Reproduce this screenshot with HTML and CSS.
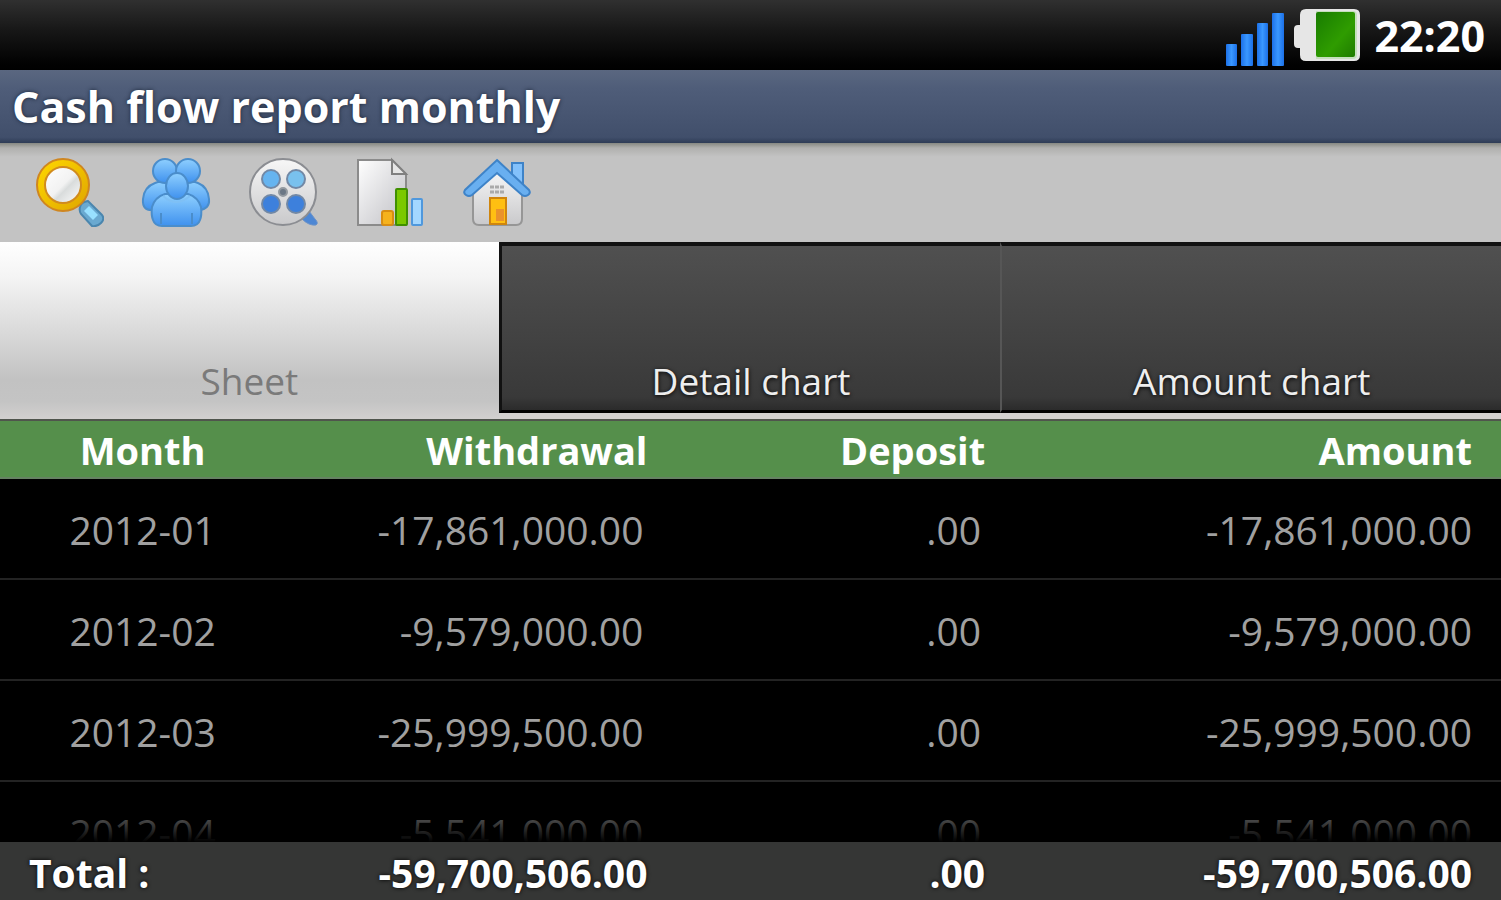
FILE: index.html
```html
<!DOCTYPE html>
<html lang="en">
<head>
  <meta charset="UTF-8" />
  <meta name="viewport" content="width=device-width, initial-scale=1" />
  <title>Cash flow report monthly</title>
  <link rel="stylesheet" href="styles.css">
</head>
<body>

  <div class="status-bar">
    <svg class="signal" viewBox="0 0 60 56" aria-hidden="true">
      <defs>
        <linearGradient id="bar" x1="0" y1="0" x2="1" y2="0">
          <stop offset="0" stop-color="#1c70e8" />
          <stop offset=".5" stop-color="#3a98ff" />
          <stop offset="1" stop-color="#1c70e8" />
        </linearGradient>
      </defs>
      <g fill="url(#bar)">
        <rect x="1" y="34" width="11" height="22" rx="1" />
        <rect x="16" y="24" width="12" height="32" rx="1" />
        <rect x="32" y="13" width="11" height="43" rx="1" />
        <rect x="47" y="3" width="12" height="53" rx="1" />
      </g>
    </svg>
    <svg class="battery" viewBox="0 0 68 54" aria-hidden="true">
      <defs>
        <linearGradient id="charge" x1="0" y1="0" x2="1" y2="1">
          <stop offset="0" stop-color="#187c00" />
          <stop offset=".6" stop-color="#2f9c00" />
          <stop offset="1" stop-color="#1f7c00" />
        </linearGradient>
      </defs>
      <path d="M13 1h48q6 0 6 6v40q0 6-6 6H13q-6 0-6-6v-7H5q-4 0-4-4V21q0-4 4-4h2V7q0-6 6-6z" fill="#e6e6e6" />
      <path d="M23 3h37q4 0 4 4v40q0 4-4 4H23z" fill="#c5dfbd" />
      <rect x="23" y="4" width="39" height="45" rx="2" fill="url(#charge)" />
    </svg>
    <span class="clock">22:20</span>
  </div>

  <h1 class="title-bar">Cash flow report monthly</h1>

  <div class="toolbar">
    <button type="button" aria-label="Search">
      <svg viewBox="0 0 70 70">
        <defs>
          <linearGradient id="gold" x1="0" y1="0" x2="1" y2="1">
            <stop offset="0" stop-color="#ffd800" />
            <stop offset="1" stop-color="#dfa500" />
          </linearGradient>
          <linearGradient id="lens" x1="0" y1="0" x2="1" y2="1">
            <stop offset="0" stop-color="#fff" />
            <stop offset=".5" stop-color="#f2f2f2" />
            <stop offset=".6" stop-color="#d9dcdc" />
            <stop offset="1" stop-color="#fff" />
          </linearGradient>
        </defs>
        <path d="M46 50q1-5 8-6l14 14q3 4-1 8-4 4-9 3L47 57q-2-3-1-7z" fill="#6aa9d0" stroke="#4a86ae" stroke-width="2" />
        <path d="M55 49l9 9-5 5-9-9z" fill="#98e0ff" />
        <circle cx="29" cy="28" r="26" fill="url(#gold)" stroke="#cf8620" stroke-width="2" />
        <circle cx="29" cy="28" r="18" fill="url(#lens)" stroke="#d18b1e" stroke-width="2" />
      </svg>
    </button>
    <button type="button" aria-label="Members">
      <svg viewBox="0 0 70 70">
        <defs>
          <linearGradient id="people" x1="0" y1="0" x2="0" y2="1">
            <stop offset="0" stop-color="#8fd0ff" />
            <stop offset="1" stop-color="#3f91ee" />
          </linearGradient>
        </defs>
        <g fill="url(#people)" stroke="#4a8dcb" stroke-width="2">
          <path d="M14 26q9-4 18 4v23H12Q1 54 2 42q1-12 12-16z" />
          <path d="M57 26q-9-4-18 4v23h19q11-1 10-11-1-12-11-16z" />
          <ellipse cx="24" cy="14" rx="12" ry="12" />
          <ellipse cx="47" cy="14" rx="12" ry="12" />
          <path d="M24 37h23q10 3 13 13 1 8-1 13-2 6-9 6H21q-7 0-9-6-2-5-1-13 3-10 13-13z" />
          <path d="M22 39q13 12 27 0" fill="none" stroke="#7fc0f5" />
          <path d="M20 56v11M51 56v11" fill="none" />
          <ellipse cx="36" cy="29" rx="11" ry="13" />
        </g>
      </svg>
    </button>
    <button type="button" aria-label="Media">
      <svg viewBox="0 0 70 70">
        <defs>
          <linearGradient id="reel" x1="0" y1="0" x2="0" y2="1">
            <stop offset="0" stop-color="#f7f7f7" />
            <stop offset="1" stop-color="#c9c9cb" />
          </linearGradient>
        </defs>
        <path d="M54 62l7-8 6 8q4 4 1 6-7 1-14-6z" fill="#4d87d4" stroke="#6d93c8" />
        <circle cx="35" cy="35" r="33" fill="url(#reel)" stroke="#8b8d92" stroke-width="2" />
        <g stroke="#7288a5" stroke-width="2">
          <circle cx="23" cy="22" r="9" fill="#66b4f0" />
          <circle cx="48" cy="22" r="9" fill="#79c1ee" />
          <circle cx="23" cy="47" r="9" fill="#3d80dc" />
          <circle cx="48" cy="47" r="9" fill="#3d80dc" />
        </g>
        <circle cx="35" cy="35" r="4" fill="#6b7785" stroke="#949aa0" stroke-width="2" />
      </svg>
    </button>
    <button type="button" aria-label="Report">
      <svg viewBox="0 0 70 70">
        <defs>
          <linearGradient id="sheet" x1="0" y1="0" x2="1" y2="1">
            <stop offset="0" stop-color="#fff" />
            <stop offset="1" stop-color="#bfbfc4" />
          </linearGradient>
        </defs>
        <path d="M3 3h34l14 14v51H3z" fill="url(#sheet)" stroke="#8b8b8b" stroke-width="2" />
        <path d="M37 3v14h14z" fill="#e6e6e6" stroke="#808080" stroke-width="2" />
        <rect x="27" y="54" width="11" height="14" rx="2" fill="#f5b21d" stroke="#d88d12" stroke-width="2" />
        <rect x="41" y="32" width="11" height="36" rx="1" fill="#7bc900" stroke="#409000" stroke-width="2" />
        <rect x="57" y="42" width="10" height="26" rx="1" fill="#a4d7ff" stroke="#4f98dd" stroke-width="2" />
      </svg>
    </button>
    <button type="button" aria-label="Home">
      <svg viewBox="0 0 70 70">
        <path d="M50 6h11v26l-11-8z" fill="#83c1fb" stroke="#3e83c8" stroke-width="2" />
        <path d="M35 13l25 24v25q0 6-6 6H17q-6 0-6-6V37z" fill="url(#reel)" stroke="#969696" stroke-width="2" />
        <path d="M35 3l32 30q2 3-1 5-3 2-6 0L35 16 10 38q-3 2-6 0-3-2-1-5z" fill="#69aff0" stroke="#3e83c8" stroke-width="2" />
        <path d="M28 30h15M28 35h15" stroke="#aaa" stroke-width="3" stroke-dasharray="4 1" />
        <rect x="28" y="41" width="16" height="26" fill="#ffbf12" stroke="#cf850e" stroke-width="2" />
        <path d="M34 52h8v12h-8z" fill="#ea922b" />
      </svg>
    </button>
  </div>

  <div class="tabs" role="tablist">
    <button type="button" class="tab active" role="tab" aria-selected="true">Sheet</button>
    <button type="button" class="tab" role="tab" aria-selected="false">Detail chart</button>
    <button type="button" class="tab" role="tab" aria-selected="false">Amount chart</button>
  </div>

  <div class="report">
    <table>
      <thead>
        <tr>
          <th class="month">Month</th>
          <th class="withdrawal">Withdrawal</th>
          <th class="deposit">Deposit</th>
          <th class="amount">Amount</th>
        </tr>
      </thead>
      <tbody>
        <tr>
          <td>2012-01</td>
          <td>-17,861,000.00</td>
          <td>.00</td>
          <td>-17,861,000.00</td>
        </tr>
        <tr>
          <td>2012-02</td>
          <td>-9,579,000.00</td>
          <td>.00</td>
          <td>-9,579,000.00</td>
        </tr>
        <tr>
          <td>2012-03</td>
          <td>-25,999,500.00</td>
          <td>.00</td>
          <td>-25,999,500.00</td>
        </tr>
        <tr>
          <td>2012-04</td>
          <td>-5,541,000.00</td>
          <td>.00</td>
          <td>-5,541,000.00</td>
        </tr>
      </tbody>
      <tfoot>
        <tr>
          <th>Total :</th>
          <td>-59,700,506.00</td>
          <td>.00</td>
          <td>-59,700,506.00</td>
        </tr>
      </tfoot>
    </table>
  </div>

</body>
</html>
```
FILE: styles.css
```css
* {
  margin: 0;
  padding: 0;
  box-sizing: border-box;
}
body {
  display: flex;
  flex-direction: column;
  height: 100vh;
  background-color: #000;
  color: #fff;
  font-family: "Open Sans", "Noto Sans", sans-serif;
  font-size: 39px;
}
button {
  border: none;
  background: none;
  font: inherit;
  cursor: pointer;
}

/* status bar */
.status-bar {
  display: flex;
  flex: none;
  align-items: center;
  justify-content: flex-end;
  height: 70px;
  padding-right: 16px;
  background: linear-gradient(#303030, #161616 45%, #020202 90%, #000);
}
.signal {
  width: 60px;
  height: 56px;
  margin: 6px 8px 0 0;
}
.battery {
  width: 68px;
  height: 54px;
  margin-right: 13px;
}
.clock {
  padding-top: 2px;
  font-size: 43px;
  font-weight: bold;
  line-height: 70px;
}

/* title */
.title-bar {
  flex: none;
  height: 73px;
  padding-left: 12px;
  background: linear-gradient(#5a6780, #4f5d79 25%, #414f6b 92%, #2e3c56);
  font-size: 43px;
  line-height: 73px;
  text-shadow: 0 0 4px #1c2638;
}

/* toolbar */
.toolbar {
  display: flex;
  flex: none;
  gap: 37px;
  height: 99px;
  padding: 14px 34px;
  background: linear-gradient(#868882, #b0b0ae 5%, #c3c3c3 14%);
}
.toolbar button {
  width: 70px;
  height: 70px;
}
.toolbar svg {
  display: block;
  width: 100%;
}

/* tabs */
.tabs {
  display: flex;
  flex: none;
  height: 179px;
  background-color: #d2d0cf;
  border-bottom: 2px solid #50554d;
}
.tab {
  flex: 1;
  margin-bottom: 6px;
  padding-top: 106px;
  border-top: 4px solid #111;
  border-bottom: 3px solid #000;
  border-left: 2px solid #565656;
  background: linear-gradient(#505050, #393939 92%, #2b2b2b);
  color: #eee;
  font-size: 37px;
  line-height: 52px;
  text-shadow: 0 1px 4px #000;
}
.tab.active {
  margin-bottom: 0;
  border: none;
  padding-top: 100px;
  background: linear-gradient(#fff, #f4f4f4 20%, #c2c2c2 78%, #c4c4c4 90%, #d2d0cf);
  color: #7a7a7a;
  text-shadow: none;
}
.tab.active + .tab {
  border-left: 3px solid #111;
}

/* report table */
.report {
  flex: 1;
  min-height: 0;
  overflow-y: auto;
  scrollbar-width: none;
}
table {
  width: 100%;
  table-layout: fixed;
  border-collapse: separate;
  border-spacing: 0;
}
.month {
  width: 19%;
}
.withdrawal {
  width: 25%;
}
.deposit {
  width: 22.5%;
}
th, td {
  padding-right: 13px;
  text-align: right;
  white-space: nowrap;
}
th:first-child, td:first-child {
  padding-right: 0;
  text-align: center;
}
th:last-child, td:last-child,
tbody td:last-child {
  padding-right: 29px;
}
thead th {
  position: sticky;
  top: 0;
  height: 58px;
  padding-top: 3px;
  background-color: #558f4b;
  border-bottom: 2px solid #668263;
  font-size: 38px;
  line-height: 53px;
}
tbody td {
  height: 101px;
  padding-top: 2px;
  padding-right: 17px;
  border-bottom: 2px solid #232323;
  color: #a0a0a0;
  line-height: 60px;
}
tbody td:first-child {
  padding-right: 0;
}
tfoot th, tfoot td {
  position: sticky;
  bottom: 0;
  height: 58px;
  padding-top: 4px;
  background-color: #353635;
  font-weight: bold;
  line-height: 54px;
  text-shadow: 0 0 4px #000;
}
tfoot th:first-child {
  padding-left: 29px;
  text-align: left;
}
/* list fades out above the totals */
tfoot th::before, tfoot td::before {
  content: "";
  position: absolute;
  right: 0;
  bottom: 100%;
  left: 0;
  height: 50px;
  background: linear-gradient(transparent, #000);
}
```
